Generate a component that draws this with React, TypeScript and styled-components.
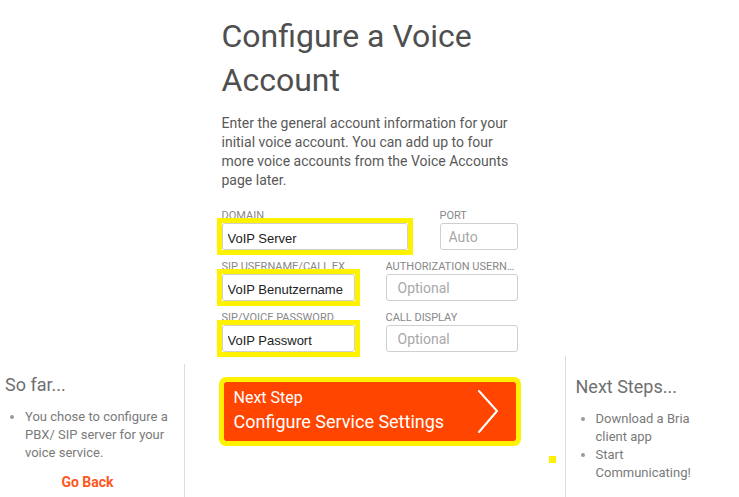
import React from "react";
import styled, { createGlobalStyle } from "styled-components";

const GlobalStyle = createGlobalStyle`
    html, body {
        margin: 0;
        padding: 0;
        background: #ffffff;
        overflow: hidden;
    }
    body {
        font-family: Roboto, "Liberation Sans", Arial, sans-serif;
        color: #555555;
    }
    #root {
        height: 100vh;
    }
`;

const Page = styled.div`
    display: grid;
    grid-template-columns: 1fr 296px 1fr;
    grid-template-rows: auto 1fr;
    height: 100vh;
`;

const Main = styled.main`
    grid-column: 2;
    grid-row: 1;
`;

const Title = styled.h1`
    margin: 14px 0 0;
    font-size: 32px;
    font-weight: 400;
    line-height: 44px;
    color: #4f4f4f;
`;

const Intro = styled.p`
    margin: 12px 0 0;
    font-size: 14px;
    line-height: 19px;
    color: #595959;
`;

const Form = styled.div`
    margin-top: 18px;
    display: flex;
    flex-direction: column;
`;

const FieldRow = styled.div`
    display: flex;
    justify-content: space-between;
    margin-bottom: 9px;

    &:last-child {
        margin-bottom: 4px;
    }
`;

const Field = styled.div<{ $width: number }>`
    display: flex;
    flex-direction: column;
    width: ${({ $width }) => $width}px;
`;

const Label = styled.label`
    display: block;
    height: 12px;
    padding-top: 2px;
    margin-bottom: 1px;
    font-size: 11px;
    line-height: 12px;
    color: #888888;
    text-transform: uppercase;
    white-space: nowrap;
    overflow: hidden;
    text-overflow: ellipsis;
`;

const InputFrame = styled.div<{ $highlight?: boolean }>`
    display: flex;
    outline: ${({ $highlight }) => ($highlight ? "5px solid #fff200" : "none")};
`;

const Input = styled.input<{ $highlight?: boolean; $pad?: number }>`
    box-sizing: border-box;
    width: 100%;
    height: 27px;
    margin: 0;
    border: 1px solid #cfcfcf;
    border-radius: 3px;
    background: #ffffff;
    outline: none;
    padding: ${({ $highlight }) => ($highlight ? "4px 0 0" : "0")};
    padding-left: ${({ $pad = 11 }) => $pad}px;
    font-family: ${({ $highlight }) =>
        $highlight ? `"Liberation Sans", Arial, sans-serif` : `Roboto, sans-serif`};
    font-size: ${({ $highlight }) => ($highlight ? 13 : 14)}px;
    color: #222222;

    &::placeholder {
        color: #a8a8a8;
    }
`;

const Sidebar = styled.aside<{ $side: "left" | "right" }>`
    grid-row: 2;
    grid-column: ${({ $side }) => ($side === "left" ? 1 : 3)};
    justify-self: start;
    box-sizing: border-box;
    ${({ $side }) =>
        $side === "left"
            ? `
        width: 185px;
        margin-top: 8px;
        padding: 10px 14px 0 5px;
        border-right: 1px solid #dfdecf;
    `
            : `
        width: 174px;
        margin-left: 47px;
        padding: 20px 0 0 10px;
        border-left: 1px solid #dfdecf;
    `}
`;

const SideTitle = styled.h3`
    margin: 0;
    font-size: 18px;
    font-weight: 400;
    line-height: 22px;
    color: #6f6f6f;
`;

const SideList = styled.ul<{ $maxWidth?: number }>`
    margin: 12px 0 0;
    padding-left: 20px;
    font-size: 13px;
    line-height: 18px;
    color: #7a7a7a;
    max-width: ${({ $maxWidth }) => ($maxWidth ? `${$maxWidth}px` : "none")};

    li::marker {
        color: #9a9a9a;
    }
`;

const BackLink = styled.a`
    display: block;
    margin-top: 11px;
    text-align: center;
    font-size: 14px;
    font-weight: 700;
    line-height: 18px;
    color: #ff5722;
    text-decoration: none;
    cursor: pointer;
`;

const Actions = styled.div`
    grid-row: 2;
    grid-column: 2;
    position: relative;
    padding-top: 26px;
`;

const NextButton = styled.button`
    box-sizing: border-box;
    display: flex;
    align-items: center;
    justify-content: space-between;
    width: 292px;
    height: 59px;
    margin-left: 2px;
    padding: 0 17px 0 10px;
    border: none;
    border-radius: 2px;
    background: #ff4500;
    color: #ffffff;
    outline: 5px solid #fff200;
    font-family: Roboto, sans-serif;
    text-align: left;
    cursor: pointer;
`;

const ButtonText = styled.span`
    display: flex;
    flex-direction: column;
    gap: 2px;
    margin-bottom: 4px;
`;

const ButtonLine = styled.span<{ $size: number }>`
    font-size: ${({ $size }) => $size}px;
    line-height: ${({ $size }) => $size + 5}px;
`;

const Marker = styled.span`
    position: absolute;
    left: 327px;
    top: 100px;
    width: 7px;
    height: 7px;
    background: #fff200;
`;

const Chevron = () => (
    <svg width="22" height="45" viewBox="0 0 22 45" fill="none">
        <polyline
            points="2,2 20,22 2,43"
            stroke="#ffffff"
            strokeWidth="2"
            strokeLinecap="round"
            strokeLinejoin="round"
        />
    </svg>
);

const App: React.FC = () => {
    return (
        <>
            <GlobalStyle />
            <Page>
                <Main>
                    <Title>Configure a Voice Account</Title>
                    <Intro>
                        Enter the general account information for your initial voice
                        account. You can add up to four more voice accounts from the
                        Voice Accounts page later.
                    </Intro>
                    <Form>
                        <FieldRow>
                            <Field $width={186}>
                                <Label>Domain</Label>
                                <InputFrame $highlight>
                                    <Input $highlight $pad={5} defaultValue="VoIP Server" readOnly />
                                </InputFrame>
                            </Field>
                            <Field $width={78}>
                                <Label>Port</Label>
                                <InputFrame>
                                    <Input $pad={8} placeholder="Auto" readOnly />
                                </InputFrame>
                            </Field>
                        </FieldRow>
                        <FieldRow>
                            <Field $width={133}>
                                <Label>SIP Username/Call Extension</Label>
                                <InputFrame $highlight>
                                    <Input
                                        $highlight
                                        $pad={5}
                                        defaultValue="VoIP Benutzername"
                                        readOnly
                                    />
                                </InputFrame>
                            </Field>
                            <Field $width={132}>
                                <Label>Authorization Username</Label>
                                <InputFrame>
                                    <Input placeholder="Optional" readOnly />
                                </InputFrame>
                            </Field>
                        </FieldRow>
                        <FieldRow>
                            <Field $width={133}>
                                <Label>SIP/Voice Password</Label>
                                <InputFrame $highlight>
                                    <Input $highlight $pad={5} defaultValue="VoIP Passwort" readOnly />
                                </InputFrame>
                            </Field>
                            <Field $width={132}>
                                <Label>Call Display</Label>
                                <InputFrame>
                                    <Input placeholder="Optional" readOnly />
                                </InputFrame>
                            </Field>
                        </FieldRow>
                    </Form>
                </Main>

                <Sidebar $side="left">
                    <SideTitle>So far...</SideTitle>
                    <SideList>
                        <li>You chose to configure a PBX/ SIP server for your voice service.</li>
                    </SideList>
                    <BackLink>Go Back</BackLink>
                </Sidebar>

                <Actions>
                    <NextButton>
                        <ButtonText>
                            <ButtonLine $size={16}>Next Step</ButtonLine>
                            <ButtonLine $size={18}>Configure Service Settings</ButtonLine>
                        </ButtonText>
                        <Chevron />
                    </NextButton>
                    <Marker />
                </Actions>

                <Sidebar $side="right">
                    <SideTitle>Next Steps...</SideTitle>
                    <SideList $maxWidth={100}>
                        <li>Download a Bria client app</li>
                        <li>Start Communicating!</li>
                    </SideList>
                </Sidebar>
            </Page>
        </>
    );
};

export default App;
